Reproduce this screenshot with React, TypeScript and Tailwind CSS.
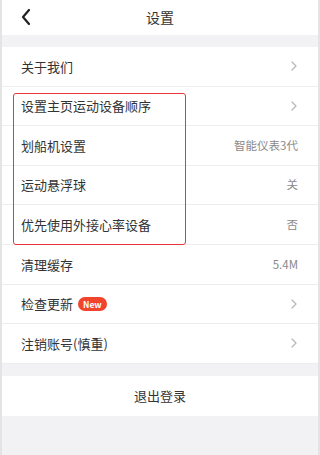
import React from "react";

type Row = {
  label: string;
  value?: string;
  arrow?: boolean;
  badge?: boolean;
};

const ROWS: Row[] = [
  { label: "关于我们", arrow: true },
  { label: "设置主页运动设备顺序", arrow: true },
  { label: "划船机设置", value: "智能仪表3代" },
  { label: "运动悬浮球", value: "关" },
  { label: "优先使用外接心率设备", value: "否" },
  { label: "清理缓存", value: "5.4M" },
  { label: "检查更新", arrow: true, badge: true },
  { label: "注销账号(慎重)", arrow: true },
];

const Chevron = () => (
  <svg width="8" height="12" viewBox="0 0 8 12" fill="none">
    <path d="M2 2l4 4-4 4" stroke="#b8b8b8" strokeWidth="1.3" strokeLinecap="round" strokeLinejoin="round" />
  </svg>
);

const SettingRow: React.FC<{ row: Row }> = ({ row }) => (
  <div className="flex h-[39.6px] items-center justify-between border-b border-[#ededed] pl-[19px] pr-[20px]">
    <div className="flex items-center gap-[5px]">
      <span className="text-[13px] text-[#333]">{row.label}</span>
      {row.badge && (
        <span className="flex h-[14px] items-center rounded-full bg-[#f0452c] px-[5px] text-[8.5px] font-bold leading-none text-white">
          New
        </span>
      )}
    </div>
    {row.arrow ? (
      <Chevron />
    ) : (
      <span className="text-[11.5px] text-[#8a8a8a]">{row.value}</span>
    )}
  </div>
);

export default function App() {
  return (
    <div
      className="relative h-[455px] w-[320px] overflow-hidden border-x-2 border-[#e4e4e6] bg-[#f2f2f4]"
      style={{ fontFamily: '"Noto Sans CJK SC", "Noto Sans", sans-serif' }}
    >
      {/* Header */}
      <div className="relative flex h-[35px] items-center justify-center bg-white">
        <svg className="absolute left-[18px] top-[8px]" width="12" height="18" viewBox="0 0 12 18" fill="none">
          <path d="M9 2L3 9l6 7" stroke="#222" strokeWidth="2.2" strokeLinecap="round" strokeLinejoin="round" />
        </svg>
        <span className="text-[14px] text-[#333]">设置</span>
      </div>

      <div className="h-[12px]" />

      {/* Settings list */}
      <div className="bg-white">
        {ROWS.map((row) => (
          <SettingRow key={row.label} row={row} />
        ))}
      </div>

      <div className="h-[12px]" />

      {/* Logout */}
      <div className="flex h-[40px] items-center justify-center bg-white">
        <span className="text-[13px] text-[#333]">退出登录</span>
      </div>

      {/* Highlight annotation */}
      <div className="absolute left-[11px] top-[93px] h-[152px] w-[173px] rounded-[3px] border border-[#e8363c]" />
    </div>
  );
}
